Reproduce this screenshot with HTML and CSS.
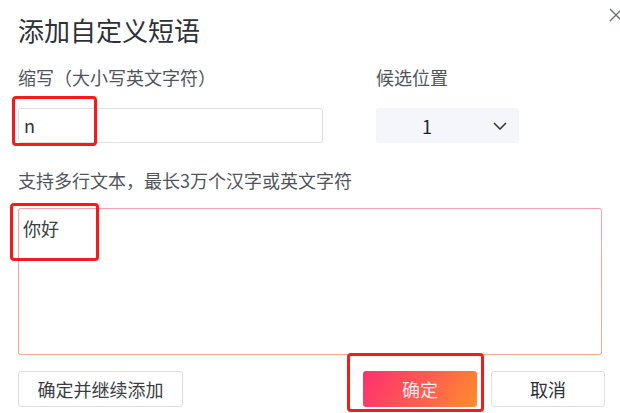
FILE: index.html
```html
<!DOCTYPE html>
<html lang="zh-CN">
<head>
<meta charset="utf-8">
<title>添加自定义短语</title>
<link rel="stylesheet" href="styles.css">
</head>
<body>
<div class="dialog">
  <svg class="close" viewBox="0 0 16 16" width="16" height="16"><path d="M2 2 L14 14 M14 2 L2 14" stroke="#6b6f78" stroke-width="1.4" fill="none"/></svg>
  <h1 class="title">添加自定义短语</h1>
  <div class="row">
    <div class="col col-abbr">
      <div class="label">缩写（大小写英文字符）</div>
      <div class="field-wrap">
        <div class="input">n</div>
        <div class="mark mark-input"></div>
      </div>
    </div>
    <div class="col col-pos">
      <div class="label">候选位置</div>
      <div class="select">
        <span class="select-val">1</span>
        <svg class="chev" viewBox="0 0 14 8" width="14" height="8"><path d="M1 1 L7 7 L13 1" stroke="#333" stroke-width="1.5" fill="none"/></svg>
      </div>
    </div>
  </div>
  <div class="label label-text">支持多行文本，最长3万个汉字或英文字符</div>
  <div class="field-wrap">
    <div class="textarea-border">
      <div class="textarea">你好</div>
    </div>
    <div class="mark mark-text"></div>
  </div>
  <div class="actions">
    <button class="btn btn-more">确定并继续添加</button>
    <div class="spacer"></div>
    <div class="field-wrap">
      <button class="btn btn-ok">确定</button>
      <div class="mark mark-ok"></div>
    </div>
    <button class="btn btn-cancel">取消</button>
  </div>
</div>
</body>
</html>
```
FILE: styles.css
```css
html, body {
  margin: 0;
  padding: 0;
  background: #ffffff;
  overflow: hidden;
}
body {
  font-family: "Noto Sans CJK SC", "Noto Sans", sans-serif;
  color: #333;
  width: 620px;
  height: 413px;
}
.dialog {
  position: relative;
  padding: 0 18px 0 18px;
  width: 620px;
  height: 413px;
  box-sizing: border-box;
}
.close {
  position: absolute;
  top: 7px;
  right: -4px;
}
.title {
  margin: 0;
  padding-top: 12px;
  font-size: 26px;
  line-height: 36px;
  font-weight: 400;
  color: #2e3138;
}
.row {
  display: flex;
  gap: 53px;
  margin-top: 17px;
}
.col-abbr { width: 305px; }
.col-pos { width: 143px; }
.label {
  font-size: 18px;
  line-height: 24px;
  color: #50545c;
}
.field-wrap {
  position: relative;
}
.col .label { margin-bottom: 19px; }
.input {
  height: 35px;
  box-sizing: border-box;
  border: 1px solid #dcdfe6;
  border-radius: 3px;
  padding-left: 5px;
  font-size: 18px;
  line-height: 32px;
  color: #2e3138;
}
.select {
  height: 35px;
  box-sizing: border-box;
  background: #f4f6fb;
  border-radius: 3px;
  display: flex;
  align-items: center;
  padding-left: 46px;
  padding-right: 12px;
  justify-content: space-between;
}
.select-val {
  font-size: 18px;
  color: #222;
}
.label-text {
  margin-top: 25px;
}
.textarea-border {
  margin-top: 16px;
  height: 147px;
  width: 584px;
  box-sizing: border-box;
  padding: 1px;
  border-radius: 3px;
  background: linear-gradient(180deg, #ffa0ac 0%, #ffa98a 100%);
}
.textarea {
  height: 100%;
  background: #fff;
  border-radius: 2px;
  padding: 6px 4px;
  box-sizing: border-box;
  font-size: 18px;
  line-height: 26px;
  color: #3a3d44;
}
.actions {
  display: flex;
  align-items: center;
  margin-top: 16px;
}
.spacer { flex: 1; }
.btn {
  height: 36px;
  box-sizing: border-box;
  border-radius: 3px;
  font-family: "Noto Sans CJK SC", "Noto Sans", sans-serif;
  font-size: 18px;
  padding: 0;
  display: block;
}
.btn-more {
  width: 165px;
  border: 1px solid #dcdfe6;
  background: #fff;
  color: #3a3d44;
}
.btn-ok {
  width: 114px;
  border: none;
  color: #ffe9ec;
  background: linear-gradient(120deg, #ff2f70 0%, #ff5a52 50%, #ff8e2a 100%);
}
.btn-cancel {
  width: 114px;
  margin-left: 14px;
  margin-right: -3px;
  border: 1px solid #dcdfe6;
  background: #fff;
  color: #2e3138;
}
.mark {
  position: absolute;
  border: 3px solid #f51b1b;
  border-radius: 4px;
  box-sizing: border-box;
  pointer-events: none;
}
.mark-input {
  left: -6px;
  top: -12px;
  width: 85px;
  height: 50px;
}
.mark-text {
  left: -8px;
  top: -5px;
  width: 89px;
  height: 58px;
}
.mark-ok {
  left: -16px;
  top: -18px;
  width: 137px;
  height: 59px;
}
```
